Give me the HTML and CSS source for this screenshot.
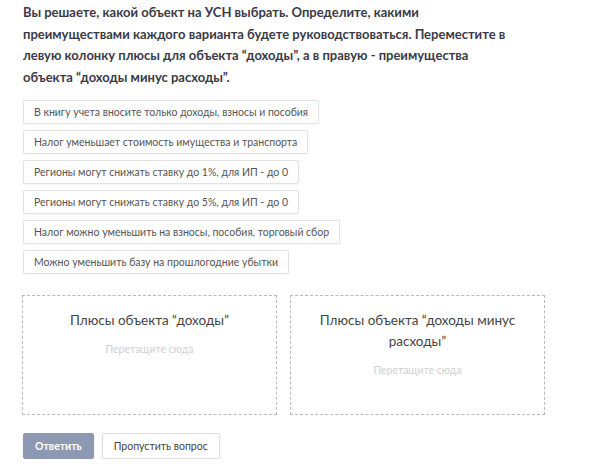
FILE: index.html
```html
<!DOCTYPE html>
<html lang="ru">
<head>
<meta charset="UTF-8">
<meta name="viewport" content="width=device-width, initial-scale=1.0">
<title>Вопрос</title>
<link rel="stylesheet" href="styles.css">
</head>
<body>
<div class="question">
  <p class="question-text">Вы решаете, какой объект на УСН выбрать. Определите, какими<br>преимуществами каждого варианта будете руководствоваться. Переместите в левую колонку плюсы для объекта “доходы”, а в правую - преимущества объекта “доходы минус расходы”.</p>

  <div class="options">
    <div class="option" draggable="true">В книгу учета вносите только доходы, взносы и пособия</div>
    <div class="option" draggable="true">Налог уменьшает стоимость имущества и транспорта</div>
    <div class="option" draggable="true">Регионы могут снижать ставку до 1%, для ИП - до 0</div>
    <div class="option" draggable="true">Регионы могут снижать ставку до 5%, для ИП - до 0</div>
    <div class="option" draggable="true">Налог можно уменьшить на взносы, пособия, торговый сбор</div>
    <div class="option" draggable="true">Можно уменьшить базу на прошлогодние убытки</div>
  </div>

  <div class="zones">
    <div class="zone">
      <div class="zone-title">Плюсы объекта “доходы”</div>
      <div class="zone-hint">Перетащите сюда</div>
    </div>
    <div class="zone">
      <div class="zone-title">Плюсы объекта “доходы минус расходы”</div>
      <div class="zone-hint">Перетащите сюда</div>
    </div>
  </div>

  <div class="actions">
    <button class="btn btn-primary" disabled>Ответить</button>
    <button class="btn">Пропустить вопрос</button>
  </div>
</div>
</body>
</html>
```

FILE: styles.css
```css
body {
  font-family: Lato, "Noto Sans", sans-serif;
  background-color: #fff;
  color: #444;
  margin: 0;
}

.question {
  padding: 2px 23px 0;
}

.question-text {
  max-width: 484px;
  margin: 0 0 12px;
  font-size: 13px;
  font-weight: bold;
  line-height: 21.5px;
  color: #3a3a46;
}

.options {
  display: flex;
  flex-direction: column;
  align-items: flex-start;
  gap: 6px;
}

.option {
  height: 24px;
  line-height: 22px;
  padding: 0 10px;
  border: 1px solid #e2e2e2;
  border-radius: 2px;
  box-shadow: 0 1px 2px rgba(0, 0, 0, 0.04);
  font-size: 10.5px;
  color: #555;
  background-color: #fff;
  box-sizing: border-box;
  cursor: move;
}

.zones {
  display: flex;
  gap: 13px;
  width: 523px;
  margin: 21px 0 0 -1px;
}

.zone {
  flex: 1;
  height: 120px;
  box-sizing: border-box;
  border: 1px dashed #b9b9b9;
  padding: 14px 20px 0;
  text-align: center;
}

.zone-title {
  font-size: 13.5px;
  line-height: 21px;
  color: #444;
}

.zone-hint {
  margin-top: 12px;
  font-size: 10.5px;
  color: #d0d0d5;
}

.actions {
  display: flex;
  gap: 8px;
  margin-top: 18px;
}

.btn {
  height: 26px;
  padding: 0 11px;
  font-family: inherit;
  font-size: 10.5px;
  color: #444;
  background-color: #fff;
  border: 1px solid #e0e0e0;
  border-radius: 2px;
  box-shadow: 0 1px 3px rgba(0, 0, 0, 0.08);
  cursor: pointer;
}

.btn-primary {
  color: #fff;
  font-weight: bold;
  background-color: #8d99b3;
  border-color: #8d99b3;
}
```
